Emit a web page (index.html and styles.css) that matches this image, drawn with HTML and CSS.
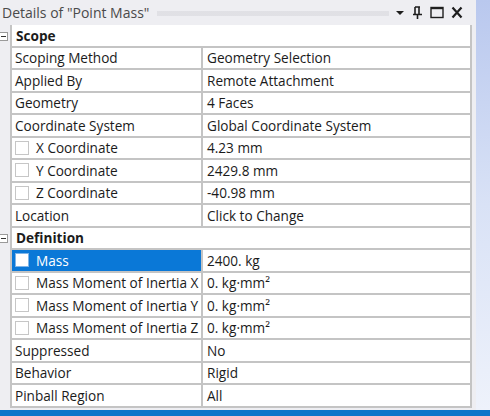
FILE: index.html
```html
<!DOCTYPE html>
<html lang="en">
<head>
    <meta charset="UTF-8">
    <title>Details of "Point Mass"</title>
    <link rel="stylesheet" href="styles.css">
</head>
<body>
    <div class="screen">
        <div class="pane">
            <div class="titlebar">
                <span class="title">Details of "Point Mass"</span>
                <span class="grip"></span>
                <div class="tools">
                    <svg class="tool" width="10" height="12" viewBox="0 0 10 12"><path d="M1 4 H9 L5 8 Z" fill="#1e1e1e"/></svg>
                    <svg class="tool" width="11" height="13" viewBox="0 0 11 13"><path d="M3 1 H8 M3 1 V8 M7 1 V8 M1 8.5 H10 M5.5 9 V13" stroke="#1e1e1e" stroke-width="1.6" fill="none"/></svg>
                    <svg class="tool" width="14" height="13" viewBox="0 0 14 13"><rect x="1" y="1.5" width="12" height="10" fill="none" stroke="#1e1e1e" stroke-width="1.4"/><path d="M1 2.2 H13" stroke="#1e1e1e" stroke-width="2"/></svg>
                    <svg class="tool" width="12" height="13" viewBox="0 0 12 13"><path d="M1.5 1.5 L10.5 11.5 M10.5 1.5 L1.5 11.5" stroke="#1e1e1e" stroke-width="2.2"/></svg>
                </div>
            </div>

            <div class="props">
                <div class="gut"><span class="toggle"></span></div>
                <div class="group">Scope</div>

                <div class="gut"></div>
                <div class="name">Scoping Method</div>
                <div class="val">Geometry Selection</div>

                <div class="gut"></div>
                <div class="name">Applied By</div>
                <div class="val">Remote Attachment</div>

                <div class="gut"></div>
                <div class="name">Geometry</div>
                <div class="val">4 Faces</div>

                <div class="gut"></div>
                <div class="name">Coordinate System</div>
                <div class="val">Global Coordinate System</div>

                <div class="gut"></div>
                <div class="name"><span class="check"></span>X Coordinate</div>
                <div class="val">4.23 mm</div>

                <div class="gut"></div>
                <div class="name"><span class="check"></span>Y Coordinate</div>
                <div class="val">2429.8 mm</div>

                <div class="gut"></div>
                <div class="name"><span class="check"></span>Z Coordinate</div>
                <div class="val">-40.98 mm</div>

                <div class="gut"></div>
                <div class="name">Location</div>
                <div class="val">Click to Change</div>

                <div class="gut"><span class="toggle"></span></div>
                <div class="group">Definition</div>

                <div class="gut"></div>
                <div class="name selected"><span class="check"></span>Mass</div>
                <div class="val">2400. kg</div>

                <div class="gut"></div>
                <div class="name"><span class="check"></span>Mass Moment of Inertia X</div>
                <div class="val">0. kg·mm²</div>

                <div class="gut"></div>
                <div class="name"><span class="check"></span>Mass Moment of Inertia Y</div>
                <div class="val">0. kg·mm²</div>

                <div class="gut"></div>
                <div class="name"><span class="check"></span>Mass Moment of Inertia Z</div>
                <div class="val">0. kg·mm²</div>

                <div class="gut"></div>
                <div class="name">Suppressed</div>
                <div class="val">No</div>

                <div class="gut"></div>
                <div class="name">Behavior</div>
                <div class="val">Rigid</div>

                <div class="gut"></div>
                <div class="name">Pinball Region</div>
                <div class="val">All</div>
            </div>
        </div>
        <div class="side"></div>
    </div>
    <div class="taskbar"></div>
</body>
</html>
```

FILE: styles.css
```css
* {
    margin: 0;
    padding: 0;
    box-sizing: border-box;
}

body {
    width: 490px;
    height: 416px;
    overflow: hidden;
    background: #f4f4f4;
    font-family: 'Open Sans', 'Noto Sans', sans-serif;
    font-size: 13.6px;
    color: #1b1b1b;
    display: flex;
    flex-direction: column;
}

.screen {
    display: flex;
    height: 410px;
}

.pane {
    width: 476px;
    background: #eeeef2;
    padding-right: 4px;
    display: flex;
    flex-direction: column;
}

.side {
    flex: 1;
    background: linear-gradient(#b9c8ee, #d9e2f6 50%, #eef2fb);
}

.titlebar {
    height: 25px;
    display: flex;
    align-items: center;
    padding-left: 2px;
}

.title {
    font-size: 14px;
    color: #4a4a4a;
    white-space: nowrap;
}

.grip {
    flex: 1;
    height: 5px;
    margin: 1px 6px 0 8px;
    background-image: radial-gradient(#d0d0d6 0.6px, transparent 0.8px);
    background-size: 2px 2px;
}

.tools {
    display: flex;
    align-items: center;
    gap: 7px;
    padding-right: 9px;
}

.tool {
    display: block;
}

.props {
    display: grid;
    grid-template-columns: 10px 193px 1fr;
    grid-auto-rows: 22.5px;
    background: #fff;
}

.gut {
    background: #eeeef2;
    display: flex;
    align-items: center;
}

.toggle {
    position: relative;
    width: 9px;
    height: 9px;
    margin-left: -1px;
    border: 1px solid #9a9a9a;
    background: #fff;
}

.toggle::after {
    content: "";
    position: absolute;
    left: 1px;
    right: 1px;
    top: 3px;
    height: 1px;
    background: #333;
}

.group {
    grid-column: 2 / 4;
    font-weight: bold;
    display: flex;
    align-items: center;
    padding-left: 4px;
    border-left: 2px solid #c4c4c4;
    border-right: 2px solid #c4c4c4;
    border-bottom: 2px solid #c4c4c4;
}

.name,
.val {
    display: flex;
    align-items: center;
    white-space: nowrap;
    overflow: hidden;
    border-bottom: 2px solid #c4c4c4;
}

.name {
    padding-left: 3px;
    border-left: 2px solid #c4c4c4;
    border-right: 2px solid #c4c4c4;
}

.val {
    padding-left: 4px;
    border-right: 2px solid #c4c4c4;
}

.check {
    width: 14px;
    height: 14px;
    border: 1px solid #c6c6c6;
    background: #fff;
    margin-right: 7px;
    flex-shrink: 0;
}

.name.selected {
    background: #0a78d7;
    color: #fff;
}

.name.selected .check {
    border-color: #7fb5e8;
}

.taskbar {
    height: 6px;
    background: #0f74c9;
}
```
